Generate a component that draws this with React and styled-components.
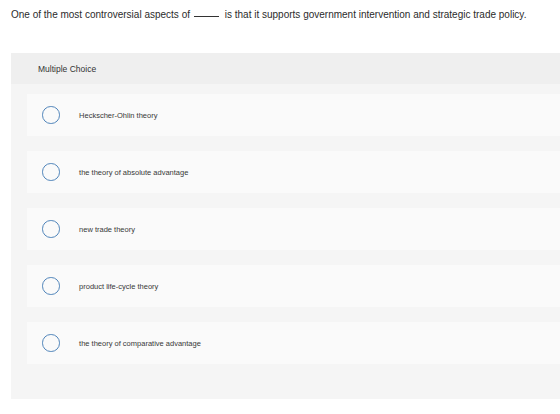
import React from "react";
import styled, { createGlobalStyle } from "styled-components";

const GlobalStyle = createGlobalStyle`
  html, body {
    margin: 0;
    padding: 0;
    background: #ffffff;
    overflow: hidden;
  }
  body {
    font-family: "Liberation Sans", Arial, sans-serif;
    color: #333333;
  }
`;

const Page = styled.div`
  width: 620px;
  padding: 9px 0 0 11px;
`;

const Question = styled.p`
  margin: 0;
  font-size: 10px;
  line-height: 12px;
  color: #2b2b2b;
  white-space: nowrap;
`;

const Blank = styled.span`
  display: inline-block;
  width: 25px;
  border-bottom: 1px solid #333;
  margin: 0 3px 0 4px;
  vertical-align: 1px;
`;

const Panel = styled.section`
  margin-top: 32px;
  background: #f5f5f5;
  padding-bottom: 35px;
`;

const PanelHead = styled.div`
  height: 31px;
  display: flex;
  align-items: center;
  padding-left: 27px;
  background: #efefef;
  font-size: 8.5px;
  color: #333;
`;

const Options = styled.ul`
  list-style: none;
  margin: 0;
  padding: 10px 16px 0 16px;
  display: flex;
  flex-direction: column;
  gap: 15px;
`;

const Option = styled.li`
  height: 42px;
  background: #fafafa;
  display: flex;
  align-items: center;
  padding-left: 15px;
`;

const Radio = styled.span`
  width: 15.6px;
  height: 15.6px;
  border-radius: 50%;
  border: 1.8px solid #5286bb;
  flex-shrink: 0;
`;

const Label = styled.span`
  margin-left: 19.5px;
  font-size: 7.5px;
  color: #383838;
`;

const choices = [
  "Heckscher-Ohlin theory",
  "the theory of absolute advantage",
  "new trade theory",
  "product life-cycle theory",
  "the theory of comparative advantage",
];

export default function App() {
  return (
    <>
      <GlobalStyle />
      <Page>
        <Question>
          One of the most controversial aspects of<Blank /> is that it supports
          government intervention and strategic trade policy.
        </Question>
        <Panel>
          <PanelHead>Multiple Choice</PanelHead>
          <Options>
            {choices.map((c) => (
              <Option key={c}>
                <Radio />
                <Label>{c}</Label>
              </Option>
            ))}
          </Options>
        </Panel>
      </Page>
    </>
  );
}
